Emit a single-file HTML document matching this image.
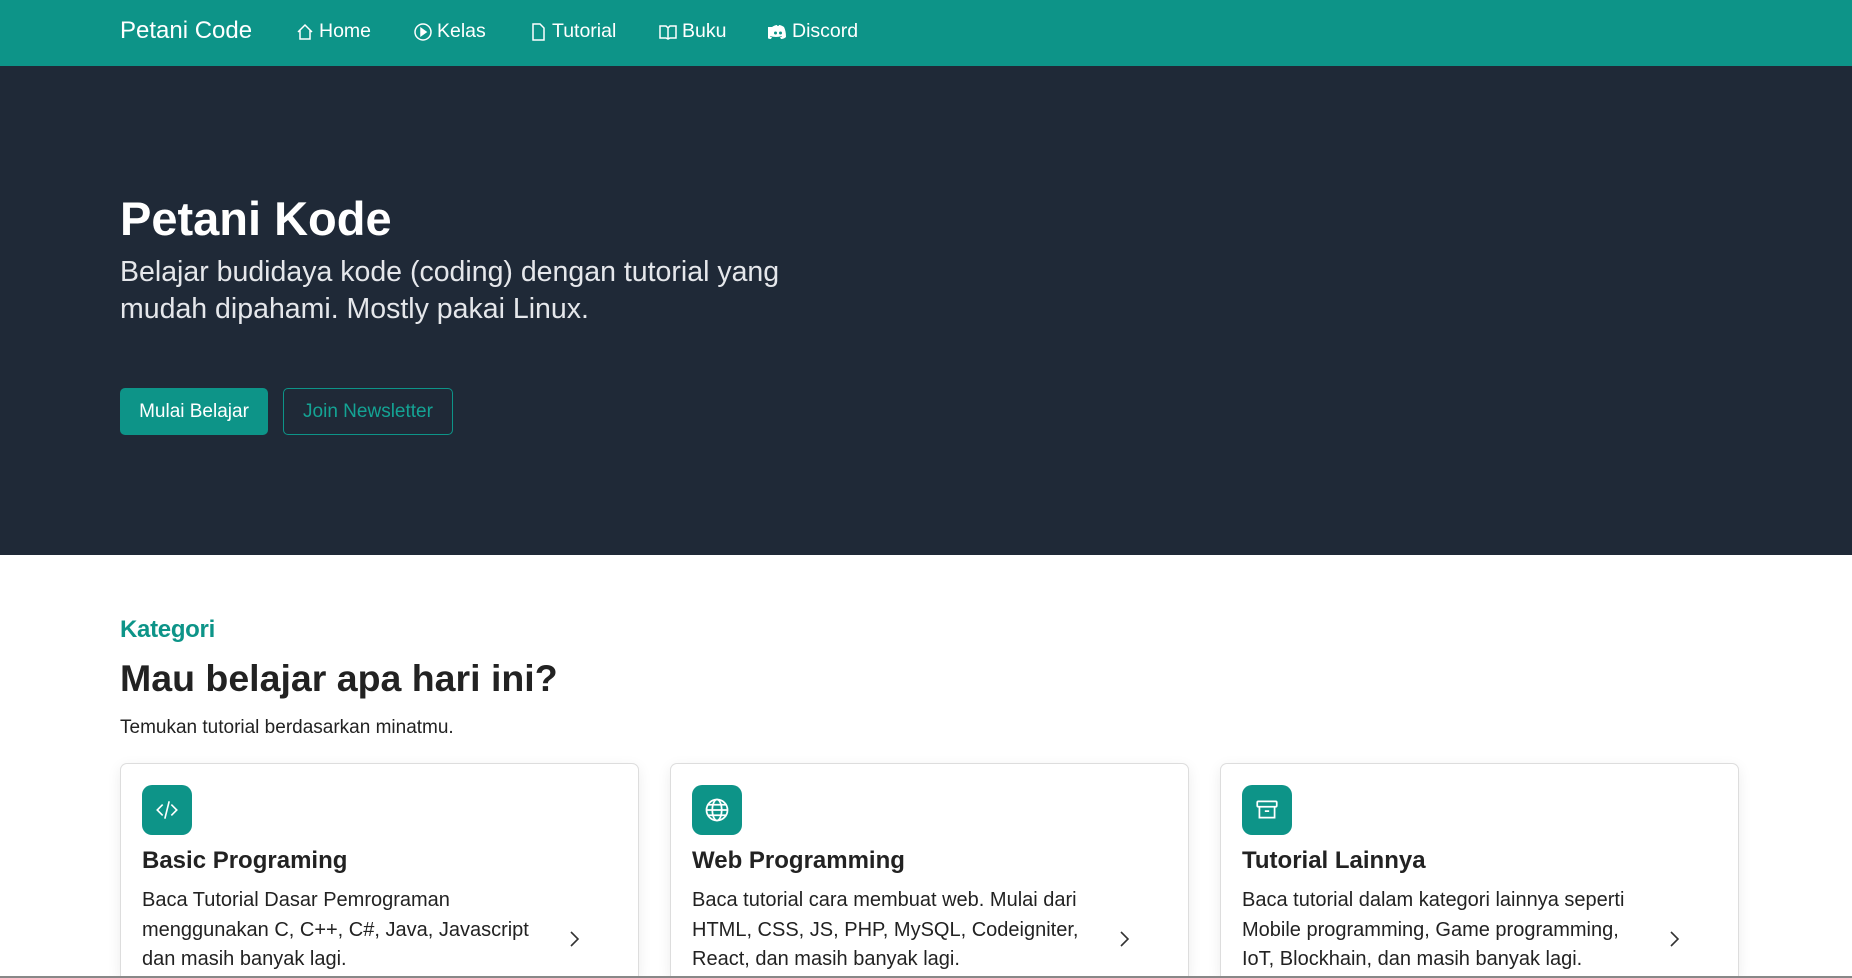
<!DOCTYPE html>
<html><head><meta charset="utf-8"><style>
*{box-sizing:border-box;margin:0;padding:0}
html,body{width:1852px;height:978px;overflow:hidden}
body{font-family:"Liberation Sans",Arial,sans-serif;background:#fff;position:relative;color:#1f2937}
.nav{position:absolute;left:0;top:0;width:1852px;height:66px;background:#0d9488;color:#fff}
.brand{position:absolute;left:120px;top:17px;font-size:24px}
.ni{position:absolute;top:20px;font-size:19.5px;display:flex;align-items:center;gap:4px}
.ni svg{width:20px;height:20px}
.hero{position:absolute;left:0;top:66px;width:1852px;height:489px;background:#1f2937;color:#fff}
h1{position:absolute;left:120px;top:125px;font-size:47px;font-weight:bold}
.sub{position:absolute;left:120px;top:188px;font-size:28.5px;font-weight:300;line-height:37px;color:#e5e7eb;width:700px}
.b1{position:absolute;left:120px;top:322px;width:148px;height:47px;background:#0d9488;border-radius:5px;color:#fff;font-size:19px;display:flex;align-items:center;justify-content:center}
.b2{position:absolute;left:283px;top:322px;width:170px;height:47px;border:1px solid #0d9488;border-radius:5px;color:#14a394;font-size:19px;display:flex;align-items:center;justify-content:center}
.kat{position:absolute;left:120px;top:616px;font-size:24px;color:#0d9488;font-weight:bold;letter-spacing:-0.3px}
h2{position:absolute;left:120px;top:657px;font-size:37.5px;font-weight:bold;color:#222}
.tem{position:absolute;left:120px;top:717px;font-size:19px;color:#222}
.card{position:absolute;top:763px;width:519px;height:213px;border:1px solid #ddd;border-bottom:none;border-radius:7px 7px 0 0;box-shadow:0 4px 14px rgba(0,0,0,.08);background:#fff}
.ic{position:absolute;left:21px;top:21px;width:50px;height:50px;background:#0d9488;border-radius:10px;display:flex;align-items:center;justify-content:center}
.ct{position:absolute;left:21px;top:83px;font-size:24px;font-weight:bold;color:#222}
.cd{position:absolute;left:21px;top:122px;font-size:20px;line-height:29.5px;color:#222;width:410px}
.ch{position:absolute;left:446px;top:164px}
.bl{position:absolute;left:0;top:976px;width:1852px;height:2px;background:#888}
</style></head><body>
<div class="nav">
<div class="brand">Petani Code</div>
<div class="ni" style="left:295px"><svg viewBox="0 0 20 20" fill="none" stroke="#fff" stroke-width="1.5"><path d="M3 10L10 3l7 7M5 8v9h10V8"/></svg>Home</div>
<div class="ni" style="left:413px"><svg viewBox="0 0 20 20" fill="none" stroke="#fff" stroke-width="1.5"><circle cx="10" cy="10" r="8"/><path d="M8 6.5v7l5-3.5z" fill="#fff"/></svg>Kelas</div>
<div class="ni" style="left:528px"><svg viewBox="0 0 20 20" fill="none" stroke="#fff" stroke-width="1.5"><path d="M5 2h7l4 4v12H5z"/></svg>Tutorial</div>
<div class="ni" style="left:658px"><svg viewBox="0 0 20 20" fill="none" stroke="#fff" stroke-width="1.5"><path d="M2 4h6l2 2 2-2h6v12h-6l-2 1-2-1H2zM10 6v11"/></svg>Buku</div>
<div class="ni" style="left:768px"><svg viewBox="0 0 20 20"><path fill="#fff" d="M4 5q3-2 5-2l.5 1h1l.5-1q2 0 5 2 2 4 2 10-2 2-5 2l-1-2q2 0 2-1-6 2-12 0 0 1 2 1l-1 2q-3 0-5-2 0-6 2-10z"/><circle cx="7.5" cy="11" r="1.5" fill="#0d9488"/><circle cx="12.5" cy="11" r="1.5" fill="#0d9488"/></svg>Discord</div>
</div>
<div class="hero">
<h1>Petani Kode</h1>
<div class="sub">Belajar budidaya kode (coding) dengan tutorial yang mudah dipahami. Mostly pakai Linux.</div>
<div class="b1">Mulai Belajar</div>
<div class="b2">Join Newsletter</div>
</div>
<div class="kat">Kategori</div>
<h2>Mau belajar apa hari ini?</h2>
<div class="tem">Temukan tutorial berdasarkan minatmu.</div>
<div class="card" style="left:120px"><div class="ic"><svg width="26" height="26" viewBox="0 0 24 24" fill="none" stroke="#fff" stroke-width="1.5"><path d="M8 7l-5 5 5 5M16 7l5 5-5 5M14 4l-4 16"/></svg></div><div class="ct">Basic Programing</div><div class="cd">Baca Tutorial Dasar Pemrograman menggunakan C, C++, C#, Java, Javascript dan masih banyak lagi.</div><svg class="ch" width="14" height="22" viewBox="0 0 14 22" fill="none" stroke="#333" stroke-width="1.6"><path d="M4 4l7 7-7 7"/></svg></div>
<div class="card" style="left:670px"><div class="ic"><svg width="28" height="28" viewBox="0 0 24 24" fill="none" stroke="#fff" stroke-width="1.5"><circle cx="12" cy="12" r="9"/><ellipse cx="12" cy="12" rx="4" ry="9"/><path d="M3 12h18M4.5 7.5h15M4.5 16.5h15"/></svg></div><div class="ct">Web Programming</div><div class="cd">Baca tutorial cara membuat web. Mulai dari HTML, CSS, JS, PHP, MySQL, Codeigniter, React, dan masih banyak lagi.</div><svg class="ch" width="14" height="22" viewBox="0 0 14 22" fill="none" stroke="#333" stroke-width="1.6"><path d="M4 4l7 7-7 7"/></svg></div>
<div class="card" style="left:1220px"><div class="ic"><svg width="26" height="26" viewBox="0 0 24 24" fill="none" stroke="#fff" stroke-width="1.6"><rect x="3" y="4" width="18" height="5" rx="1"/><path d="M5 9v10h14V9M10 13h4"/></svg></div><div class="ct">Tutorial Lainnya</div><div class="cd">Baca tutorial dalam kategori lainnya seperti Mobile programming, Game programming, IoT, Blockhain, dan masih banyak lagi.</div><svg class="ch" width="14" height="22" viewBox="0 0 14 22" fill="none" stroke="#333" stroke-width="1.6"><path d="M4 4l7 7-7 7"/></svg></div>
<div class="bl"></div>
</body></html>
